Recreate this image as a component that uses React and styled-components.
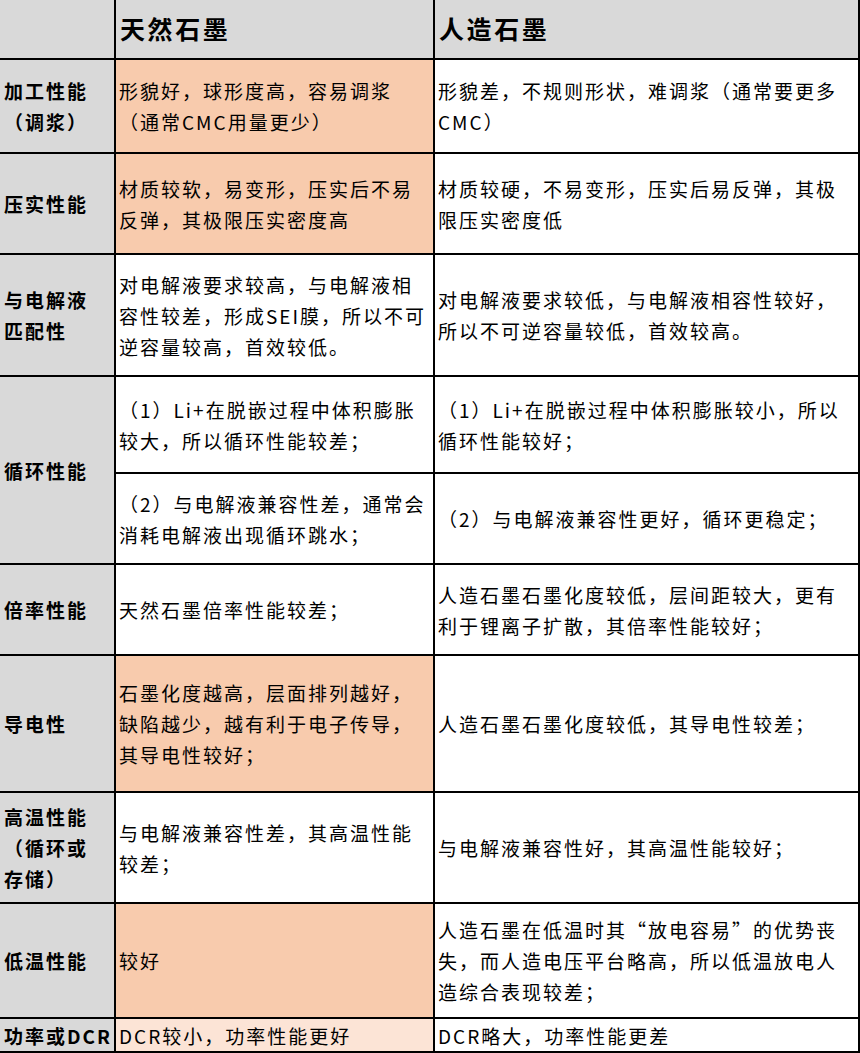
import React from "react";
import styled, { createGlobalStyle } from "styled-components";

const GlobalStyle = createGlobalStyle`
  * { box-sizing: border-box; }
  body {
    margin: 0;
    background: #ffffff;
    font-family: "Noto Sans CJK SC", "Noto Sans", sans-serif;
    color: #000;
  }
`;

const rows = [
  {
    label: "加工性能\n（调浆）",
    height: 94,
    tone: "orange",
    natural: "形貌好，球形度高，容易调浆\n（通常CMC用量更少）",
    artificial: "形貌差，不规则形状，难调浆（通常要更多\nCMC）",
  },
  {
    label: "压实性能",
    height: 101,
    tone: "orange",
    natural: "材质较软，易变形，压实后不易\n反弹，其极限压实密度高",
    artificial: "材质较硬，不易变形，压实后易反弹，其极\n限压实密度低",
  },
  {
    label: "与电解液\n匹配性",
    height: 122,
    tone: "white",
    natural: "对电解液要求较高，与电解液相\n容性较差，形成SEI膜，所以不可\n逆容量较高，首效较低。",
    artificial: "对电解液要求较低，与电解液相容性较好，\n所以不可逆容量较低，首效较高。",
  },
  {
    label: "循环性能",
    tone: "white",
    parts: [
      {
        height: 97,
        natural: "（1）Li+在脱嵌过程中体积膨胀\n较大，所以循环性能较差；",
        artificial: "（1）Li+在脱嵌过程中体积膨胀较小，所以\n循环性能较好；",
      },
      {
        height: 91,
        natural: "（2）与电解液兼容性差，通常会\n消耗电解液出现循环跳水；",
        artificial: "（2）与电解液兼容性更好，循环更稳定；",
      },
    ],
  },
  {
    label: "倍率性能",
    height: 91,
    tone: "white",
    natural: "天然石墨倍率性能较差；",
    artificial: "人造石墨石墨化度较低，层间距较大，更有\n利于锂离子扩散，其倍率性能较好；",
  },
  {
    label: "导电性",
    height: 137,
    tone: "orange",
    natural: "石墨化度越高，层面排列越好，\n缺陷越少，越有利于电子传导，\n其导电性较好；",
    artificial: "人造石墨石墨化度较低，其导电性较差；",
  },
  {
    label: "高温性能\n（循环或\n存储）",
    height: 111,
    tone: "white",
    natural: "与电解液兼容性差，其高温性能\n较差；",
    artificial: "与电解液兼容性好，其高温性能较好；",
  },
  {
    label: "低温性能",
    height: 115,
    tone: "orange",
    natural: "较好",
    artificial: "人造石墨在低温时其“放电容易”的优势丧\n失，而人造电压平台略高，所以低温放电人\n造综合表现较差；",
  },
  {
    label: "功率或DCR",
    height: 34,
    tone: "light",
    natural: "DCR较小，功率性能更好",
    artificial: "DCR略大，功率性能更差",
  },
];

const fills = {
  gray: "#d9d9d9",
  orange: "#f8cbad",
  light: "#fce4d6",
  white: "#ffffff",
};

const Table = styled.div`
  display: grid;
  grid-template-columns: 116px 319px 425px;
  width: 860px;
`;

const Cell = styled.div`
  display: flex;
  align-items: center;
  background: ${(p) => fills[p.$fill || "white"]};
  border-right: 2px solid #000;
  border-bottom: 2px solid #000;
  padding: 0 0 0 3px;
  white-space: pre;
  font-size: 19px;
  letter-spacing: 2px;
  line-height: 31px;
  overflow: hidden;
  ${(p) => (p.$span ? `grid-row: span ${p.$span};` : "")}
`;

const HeadCell = styled(Cell)`
  font-size: 25px;
  font-weight: 700;
  letter-spacing: 2.6px;
  padding-left: 4px;
  padding-bottom: 2px;
`;

const LabelCell = styled(Cell)`
  font-weight: 700;
  letter-spacing: 2px;
  padding-left: 4px;
  background: ${fills.gray};
`;

const DataCell = styled(Cell)`
  padding-left: 3px;
  ${(p) => (p.$col ? `grid-column: ${p.$col};` : "")}
`;

export default function App() {
  const heights = [60];
  rows.forEach((r) => {
    if (r.parts) r.parts.forEach((p) => heights.push(p.height));
    else heights.push(r.height);
  });

  return (
    <>
      <GlobalStyle />
      <Table style={{ gridTemplateRows: heights.map((h) => `${h}px`).join(" ") }}>
        <HeadCell $fill="gray" />
        <HeadCell $fill="gray">天然石墨</HeadCell>
        <HeadCell $fill="gray">人造石墨</HeadCell>
        {rows.map((r) =>
          r.parts ? (
            <React.Fragment key={r.label}>
              <LabelCell $span={r.parts.length}>{r.label}</LabelCell>
              {r.parts.map((p, i) => (
                <React.Fragment key={i}>
                  <DataCell $fill={r.tone} $col={2}>
                    {p.natural}
                  </DataCell>
                  <DataCell $col={3}>{p.artificial}</DataCell>
                </React.Fragment>
              ))}
            </React.Fragment>
          ) : (
            <React.Fragment key={r.label}>
              <LabelCell>{r.label}</LabelCell>
              <DataCell $fill={r.tone}>{r.natural}</DataCell>
              <DataCell>{r.artificial}</DataCell>
            </React.Fragment>
          )
        )}
      </Table>
    </>
  );
}
